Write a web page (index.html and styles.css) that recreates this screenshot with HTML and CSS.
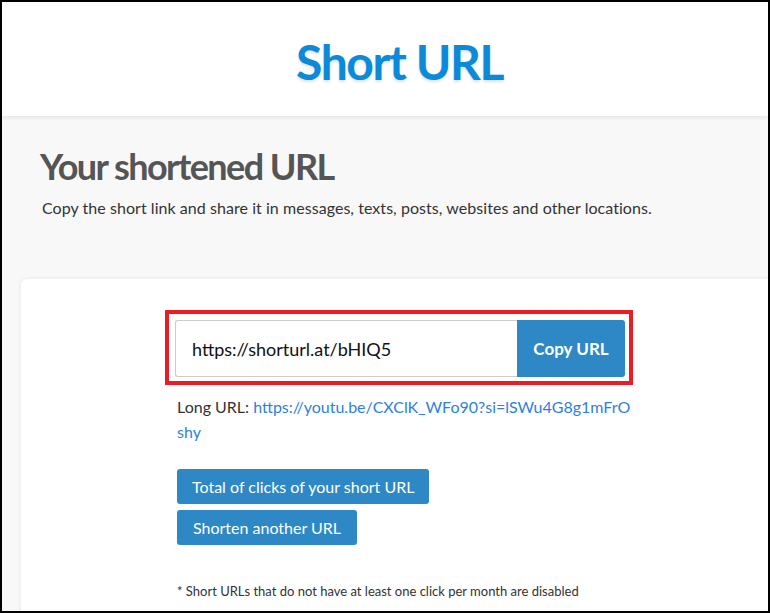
FILE: index.html
```html
<!DOCTYPE html>
<html lang="en">
<head>
    <meta charset="UTF-8">
    <meta name="viewport" content="width=device-width, initial-scale=1.0">
    <title>Short URL</title>
    <link rel="stylesheet" href="styles.css">
</head>
<body>

<div class="frame">
    <header class="top">
        <h1 class="logo">Short URL</h1>
    </header>

    <section class="intro">
        <h2>Your shortened URL</h2>
        <p>Copy the short link and share it in messages, texts, posts, websites and other locations.</p>
    </section>

    <div class="card">
        <div class="column">
            <div class="highlight">
                <div class="url-group">
                    <input type="text" class="url-input" value="https://shorturl.at/bHIQ5" readonly>
                    <button type="button" class="copy-btn">Copy URL</button>
                </div>
            </div>
            <p class="long-url">Long URL: <a href="#">https://youtu.be/CXClK_WFo90?si=lSWu4G8g1mFrO<br>shy</a></p>
            <div class="actions">
                <button type="button" class="btn">Total of clicks of your short URL</button>
                <button type="button" class="btn">Shorten another URL</button>
            </div>
            <p class="note">* Short URLs that do not have at least one click per month are disabled</p>
        </div>
    </div>
</div>

</body>
</html>
```

FILE: styles.css
```css
* {
    box-sizing: border-box;
}
body {
    margin: 0;
    font-family: Lato, "Open Sans", sans-serif;
    color: #333;
}
.frame {
    height: 613px;
    border: 2px solid #000;
    background-color: #f8f8f8;
    overflow: hidden;
}
.top {
    background-color: #fff;
    height: 114px;
    padding-top: 4px;
    box-shadow: 0 2px 4px rgba(0, 0, 0, 0.08);
    display: flex;
    align-items: center;
    justify-content: center;
    position: relative;
}
.logo {
    margin: 0;
    padding-left: 29px;
    font-size: 48px;
    font-weight: 700;
    color: #0a8ad8;
    letter-spacing: -1.4px;
    text-shadow: 0 2px 3px rgba(0, 0, 0, 0.12);
}
.intro {
    padding: 28px 0 0 38px;
    height: 163px;
}
.intro h2 {
    margin: 0;
    font-size: 36px;
    font-weight: 700;
    color: #555;
    letter-spacing: -1.55px;
}
.intro p {
    margin: 10px 0 0 2px;
    font-size: 16px;
    letter-spacing: 0.05px;
    color: #333;
}
.card {
    margin-left: 19px;
    width: 756px;
    height: 340px;
    background-color: #fff;
    border-radius: 6px 0 0 0;
    box-shadow: 0 0 4px rgba(0, 0, 0, 0.08);
    display: flex;
    justify-content: center;
}
.column {
    width: 468px;
    padding-top: 31px;
}
.highlight {
    border: 4px solid #ed1c24;
    padding: 6px 4px 4px 6px;
}
.url-group {
    display: flex;
    height: 57px;
}
.url-input {
    flex: 1;
    min-width: 0;
    border: 1px solid #ccc;
    border-right: none;
    border-radius: 3px 0 0 3px;
    padding: 0 16px;
    font-family: Lato, sans-serif;
    font-size: 18px;
    color: #111;
    outline: none;
}
.copy-btn {
    width: 108px;
    border: none;
    border-radius: 0 3px 3px 0;
    background-color: #2d88c5;
    color: #fff;
    font-family: Lato, sans-serif;
    font-size: 17px;
    font-weight: 700;
}
.long-url {
    margin: 9px 0 0 12px;
    font-size: 16px;
    line-height: 25px;
}
.long-url a {
    color: #2f7fe0;
    text-decoration: none;
}
.actions {
    margin: 25px 0 0 12px;
    display: flex;
    flex-direction: column;
    align-items: flex-start;
    gap: 6px;
}
.btn {
    height: 35px;
    padding: 0 15px;
    border: none;
    border-radius: 3px;
    background-color: #2d88c5;
    color: #fff;
    font-family: Lato, sans-serif;
    font-size: 16px;
}
.btn:last-child {
    padding: 0 16px;
}
.note {
    margin: 38px 0 0 12px;
    font-size: 13px;
    color: #333;
}
```
